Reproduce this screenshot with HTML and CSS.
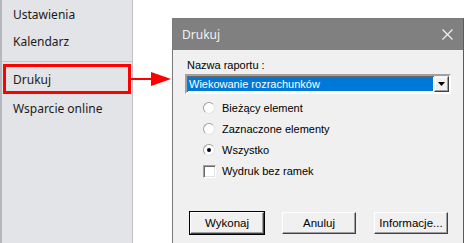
FILE: index.html
```html
<!DOCTYPE html>
<html lang="pl">
<head>
  <meta charset="UTF-8">
  <title>Drukuj</title>
  <link rel="stylesheet" href="styles.css">
</head>
<body>

<div class="screen">
  <div class="sidebar">
    <div class="item">Ustawienia</div>
    <div class="item">Kalendarz</div>
    <div class="sep"></div>
    <div class="item active">Drukuj</div>
    <div class="item">Wsparcie online</div>
  </div>

  <div class="desk">
    <div class="dialog">
      <div class="titlebar">
        <span>Drukuj</span>
        <svg class="close" width="11" height="11" viewBox="0 0 11 11"><path d="M0.5 0.5 L10.5 10.5 M10.5 0.5 L0.5 10.5" stroke="#f2f2f2" stroke-width="1.2"/></svg>
      </div>
      <div class="body">
        <div class="label">Nazwa raportu :</div>
        <div class="combo">
          <div class="combo-value">Wiekowanie rozrachunków</div>
          <div class="combo-btn"><svg width="7" height="4" viewBox="0 0 7 4"><path d="M0 0 H7 L3.5 4 Z" fill="#000"/></svg></div>
        </div>
        <div class="options">
          <div class="opt"><span class="radio"></span>Bieżący element</div>
          <div class="opt"><span class="radio"></span>Zaznaczone elementy</div>
          <div class="opt"><span class="radio on"></span>Wszystko</div>
          <div class="opt check-row"><span class="check"></span>Wydruk bez ramek</div>
        </div>
        <div class="buttons">
          <button class="btn default">Wykonaj</button>
          <button class="btn">Anuluj</button>
          <button class="btn">Informacje...</button>
        </div>
      </div>
    </div>
  </div>

  <svg class="arrow" width="44" height="16" viewBox="0 0 44 16"><path d="M0 7 H24 V9 H0 Z" fill="#f00"/><path d="M22 1 L42 8 L22 15 Z" fill="#f00"/></svg>
</div>

</body>
</html>
```

FILE: styles.css
```css
body { margin: 0; background: #fff; }
.screen { position: relative; display: flex; width: 465px; height: 243px; overflow: hidden; }

.sidebar { width: 130px; flex: none; background: #e3e4e8; border-left: 2px solid #b6b7bd; border-right: 1px solid #c2c3ca; padding-top: 2px; font-family: "Noto Sans", sans-serif; font-size: 12px; color: #1b1b1b; }
.item { height: 27px; line-height: 25px; padding-left: 11px; }
.sep { height: 1px; background: #c4c5cc; margin: 5px 0 2px; }
.item.active { margin: 0 1px 2px 1px; height: 24px; line-height: 26px; padding-left: 7px; border: 3px solid #f00; }

.desk { flex: 1; padding: 18px 0 0 39px; }
.dialog { width: 290px; height: 230px; background: #f0f0f0; border: 1px solid #7a7a7a; border-right-color: #5a5a5a; font-family: "Liberation Sans", Arial, sans-serif; font-size: 11px; color: #000; }
.titlebar { height: 31px; background: #808080; display: flex; align-items: center; justify-content: space-between; padding: 0 10px 0 9px; font-family: "Noto Sans", sans-serif; font-size: 12px; color: #f2f2f2; }

.body { padding: 6px 0 0 12px; }
.label { padding-left: 2px; height: 18px; line-height: 18px; }
.combo { display: flex; width: 261px; height: 16px; border: 2px solid; border-color: #a0a0a0 #fff #fff #a0a0a0; box-shadow: inset 1px 1px #696969; background: #fff; padding: 0 0 0 1px; }
.combo-value { flex: 1; background: #0078d7; color: #fff; padding-left: 1px; margin: 1px 1px 1px 0; line-height: 14px; }
.combo-btn { width: 15px; display: flex; align-items: center; justify-content: center; background: #f0f0f0; border: 1px solid; border-color: #f0f0f0 #404040 #404040 #f0f0f0; box-shadow: inset -1px -1px #a0a0a0, inset 1px 1px #fff; box-sizing: border-box; }

.options { padding: 3px 0 0 18px; }
.opt { display: flex; align-items: center; height: 21px; }
.check-row { height: 22px; }
.radio { width: 12px; height: 12px; border-radius: 50%; box-sizing: border-box; background: #fff; border: 1px solid; border-color: #a0a0a0 #e3e3e3 #e3e3e3 #a0a0a0; margin-right: 7px; position: relative; }
.radio.on::after { content: ""; position: absolute; left: 3px; top: 3px; width: 4px; height: 4px; border-radius: 50%; background: #000; }
.check { width: 13px; height: 13px; box-sizing: border-box; background: #fff; border: 1px solid; border-color: #a0a0a0 #fff #fff #a0a0a0; box-shadow: inset 1px 1px #696969, inset -1px -1px #e3e3e3; margin-right: 6px; }

.buttons { display: flex; gap: 18px; padding: 30px 0 0 5px; }
.btn { width: 74px; height: 22px; padding: 0; background: #f0f0f0; font-family: "Liberation Sans", Arial, sans-serif; font-size: 11.5px; color: #000; border: 1px solid; border-color: #fff #404040 #404040 #fff; box-shadow: inset -1px -1px #a0a0a0; }
.btn.default { outline: 1px solid #000; }

.arrow { position: absolute; left: 129px; top: 71px; }
```
